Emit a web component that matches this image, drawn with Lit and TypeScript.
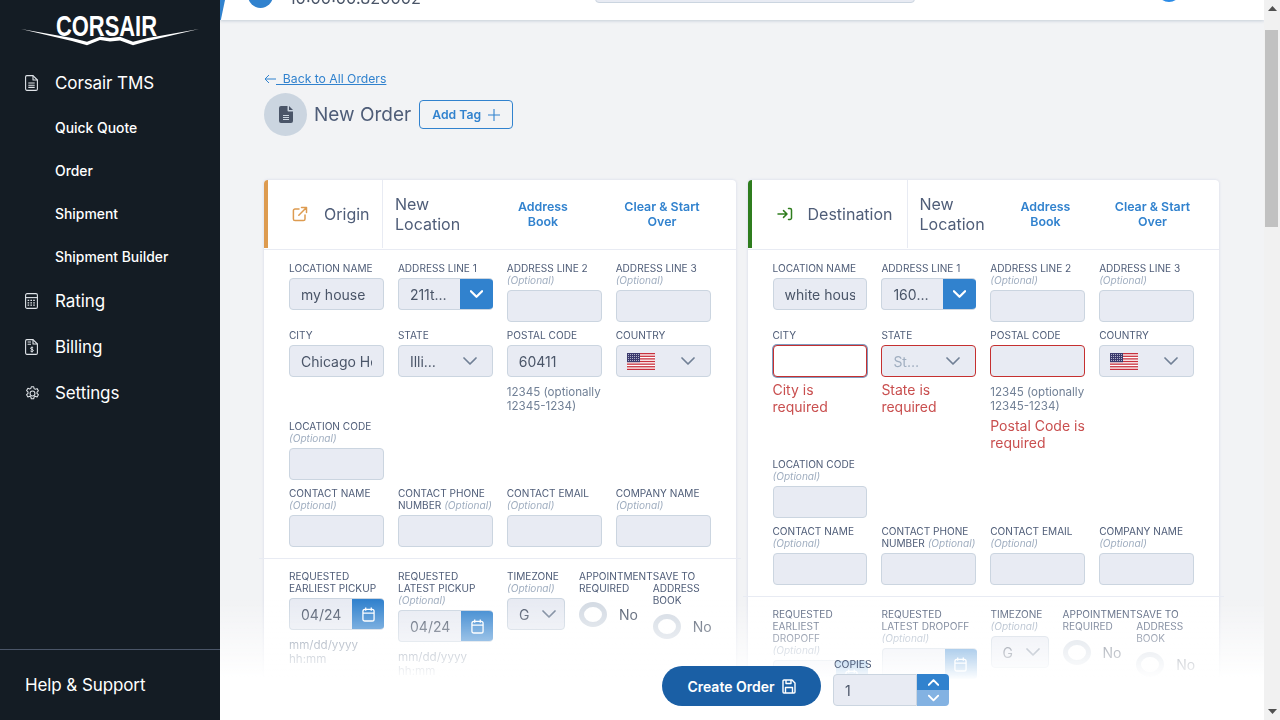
import { LitElement, html, css, nothing, svg } from "lit";
import { customElement } from "lit/decorators.js";

type Kind = "text" | "combo" | "select" | "flag" | "empty";

interface Field {
  label: string;
  opt?: boolean;
  inlineOpt?: boolean;
  kind: Kind;
  value?: string;
  placeholder?: boolean;
  invalid?: boolean;
  focus?: boolean;
  hint?: string;
  error?: string;
  newRow?: boolean;
}

interface Side {
  cls: string;
  title: string;
  icon: unknown;
  main: Field[];
  earliestLabel: string;
  latestLabel: string;
  earliestValue: string;
  latestValue: string;
  earliestOpt: boolean;
}

const chevronDown = (cls = "") => html`<svg class="chev ${cls}" viewBox="0 0 14 8" width="14" height="8"><polyline points="1,1 7,7 13,1" fill="none" stroke="currentColor" stroke-width="1.7" stroke-linecap="round" stroke-linejoin="round"/></svg>`;
const chevronUp = () => html`<svg viewBox="0 0 14 8" width="11" height="7"><polyline points="1,7 7,1 13,7" fill="none" stroke="currentColor" stroke-width="2.6" stroke-linecap="round" stroke-linejoin="round"/></svg>`;
const chevronDownBold = (w = 13) => html`<svg viewBox="0 0 14 8" width=${w} height="8"><polyline points="1,1 7,7 13,1" fill="none" stroke="currentColor" stroke-width="2.4" stroke-linecap="round" stroke-linejoin="round"/></svg>`;

const calendar = html`<svg viewBox="0 0 14 16" width="13" height="15" fill="none" stroke="currentColor" stroke-width="1.4"><rect x="1" y="2.5" width="12" height="12.5" rx="2"/><path d="M1 6.5h12M4 0.5v3.5M10 0.5v3.5" /></svg>`;

const usFlag = html`<svg class="flag" viewBox="0 0 28 17" width="28" height="17">
  <rect width="28" height="17" fill="#fff"/>
  ${[0, 2, 4, 6, 8, 10, 12].map((i) => svg`<rect y=${i * 1.31} width="28" height="1.31" fill="#c8313e"/>`)}
  <rect width="13" height="9.2" fill="#3c3b6e"/>
  ${[1.5, 3.5, 5.5, 7.5].map((y) => [1.5, 3.5, 5.5, 7.5, 9.5, 11.5].map((x) => svg`<rect x=${x - 0.4} y=${y - 0.4} width="0.9" height="0.9" fill="#cfd0e0"/>`))}
</svg>`;

const originIcon = html`<svg viewBox="0 0 16 16" width="16" height="16" fill="none" stroke="#dd9b50" stroke-width="1.5" stroke-linecap="round" stroke-linejoin="round"><path d="M7 3H3a1.6 1.6 0 0 0-1.6 1.6V13A1.6 1.6 0 0 0 3 14.6h8.4A1.6 1.6 0 0 0 13 13V9"/><path d="M9.5 1.5h5v5M14.5 1.5 6.8 9.2"/></svg>`;
const destIcon = html`<svg viewBox="0 0 16 14" width="16" height="14" fill="none" stroke="#2f7d1e" stroke-width="1.5" stroke-linecap="round" stroke-linejoin="round"><path d="M1 7h8.500M6.500 3.600 10 7l-3.500 3.400"/><path d="M11.500 1.500h1.500a1.500 1.500 0 0 1 1.500 1.500v8a1.500 1.500 0 0 1-1.500 1.500h-1.500"/></svg>`;

const navStroke = { fill: "none", stroke: "#dfe3e8", width: "1.1" };
const docIcon = html`<svg viewBox="0 0 13 16" width="13" height="16" fill=${navStroke.fill} stroke=${navStroke.stroke} stroke-width=${navStroke.width} stroke-linejoin="round"><path d="M1.800.6h6.200l4.400 4.400v9a1.400 1.400 0 0 1-1.400 1.400H1.800A1.400 1.400 0 0 1 .6 14V2A1.400 1.400 0 0 1 1.800.6Z"/><path d="M8 .6V5h4.400M3.300 8h6.400M3.300 10.200h6.400M3.300 12.400h6.400"/></svg>`;
const calcIcon = html`<svg viewBox="0 0 13 16" width="13" height="16" fill=${navStroke.fill} stroke=${navStroke.stroke} stroke-width=${navStroke.width}><rect x=".6" y=".6" width="11.800" height="14.800" rx="1.500"/><path d="M.6 4.600h11.800"/><path stroke-dasharray="1.600 1.200" stroke-width="1.300" d="M2.600 7.400h8M2.600 9.800h8M2.600 12.200h8"/></svg>`;
const billIcon = html`<svg viewBox="0 0 13 16" width="13" height="16" fill=${navStroke.fill} stroke=${navStroke.stroke} stroke-width=${navStroke.width} stroke-linejoin="round"><path d="M1.800.6h6.200l4.400 4.400v9a1.400 1.400 0 0 1-1.400 1.400H1.800A1.400 1.400 0 0 1 .6 14V2A1.400 1.400 0 0 1 1.800.6Z"/><path d="M8 .6V5h4.400M2.600 3h3.400M2.600 5.200h3.400"/><path stroke-width="1" d="M8.200 8.700c-.4-.5-2.600-.7-2.600.6 0 1.400 2.800.8 2.800 2.200 0 1.300-2.400 1.100-3 .5M7 7.700v5.800"/></svg>`;
const gearIcon = html`<svg viewBox="0 0 16 16" width="15" height="15" fill=${navStroke.fill} stroke=${navStroke.stroke} stroke-width="1.100" stroke-linejoin="round"><circle cx="8" cy="8" r="2.600"/><path d="M6.700.8h2.600l.4 2 1.300.7 1.900-.7 1.400 2.400-1.500 1.300v1.500l1.500 1.300-1.400 2.400-1.900-.7-1.300.7-.4 2H6.700l-.4-2-1.300-.7-1.900.7-1.400-2.400 1.500-1.300V6.200L1.700 4.900l1.400-2.400 1.900.7 1.300-.7Z"/></svg>`;

const addr = (value: string): Field => ({ label: "Address Line 1", kind: "combo", value });
const opt = (label: string, newRow = false): Field => ({ label, opt: true, kind: "empty", newRow });

const contactRow: Field[] = [
  opt("Contact Name", true),
  { label: "Contact Phone Number", opt: true, inlineOpt: true, kind: "empty" },
  opt("Contact Email"),
  opt("Company Name"),
];

const sides: Side[] = [
  {
    cls: "origin",
    title: "Origin",
    icon: originIcon,
    earliestLabel: "Requested Earliest Pickup",
    latestLabel: "Requested Latest Pickup",
    earliestValue: "04/24",
    latestValue: "04/24",
    earliestOpt: false,
    main: [
      { label: "Location Name", kind: "text", value: "my house" },
      addr("211th Street"),
      opt("Address Line 2"),
      opt("Address Line 3"),
      { label: "City", kind: "text", value: "Chicago Heights" },
      { label: "State", kind: "select", value: "Illinois" },
      { label: "Postal Code", kind: "text", value: "60411", hint: "12345 (optionally 12345-1234)" },
      { label: "Country", kind: "flag" },
      opt("Location Code", true),
      ...contactRow,
    ],
  },
  {
    cls: "dest",
    title: "Destination",
    icon: destIcon,
    earliestLabel: "Requested Earliest Dropoff",
    latestLabel: "Requested Latest Dropoff",
    earliestValue: "",
    latestValue: "",
    earliestOpt: true,
    main: [
      { label: "Location Name", kind: "text", value: "white house" },
      addr("1600 Pennsylvania"),
      opt("Address Line 2"),
      opt("Address Line 3"),
      { label: "City", kind: "empty", invalid: true, focus: true, error: "City is required" },
      { label: "State", kind: "select", value: "State/Province", placeholder: true, invalid: true, error: "State is required" },
      { label: "Postal Code", kind: "empty", invalid: true, hint: "12345 (optionally 12345-1234)", error: "Postal Code is required" },
      { label: "Country", kind: "flag" },
      opt("Location Code", true),
      ...contactRow,
    ],
  },
];

@customElement("app-root")
export class AppRoot extends LitElement {
  static styles = css`
    :host {
      display: flex;
      width: 1280px;
      height: 720px;
      overflow: hidden;
      position: relative;
      font-family: Inter, "Liberation Sans", sans-serif;
      color: #4a5568;
    }
    * { box-sizing: border-box; }

    /* sidebar */
    .sidebar {
      flex: 0 0 220px;
      background: #141c24;
      color: #fff;
      display: flex;
      flex-direction: column;
    }
    .logo { height: 60px; display: block; }
    .nav-main {
      height: 46px;
      display: flex;
      align-items: center;
      padding-left: 25px;
      font-size: 17px;
      letter-spacing: -0.1px;
    }
    .nav-icon { width: 30px; display: flex; align-items: center; }
    .nav-sub {
      height: 43px;
      display: flex;
      align-items: center;
      padding-left: 55px;
      font-size: 13.9px;
      font-weight: 500;
    }
    .help {
      margin-top: auto;
      height: 71px;
      border-top: 1px solid #4a5568;
      display: flex;
      align-items: center;
      padding-left: 25px;
      font-size: 17px;
      letter-spacing: -0.1px;
    }

    /* main column */
    .view {
      flex: 1;
      min-width: 0;
      background: #f2f3f5;
      display: flex;
      flex-direction: column;
      position: relative;
      overflow: hidden;
    }
    .topbar {
      flex: 0 0 20px;
      background: #fff;
      box-shadow: 0 1px 3px rgba(160, 174, 192, 0.55);
      display: flex;
      align-items: flex-end;
      overflow: hidden;
      position: relative;
      z-index: 1;
    }
    .wedge {
      position: absolute;
      left: 0;
      top: 0;
      width: 5px;
      height: 24px;
      background: #3182ce;
      clip-path: polygon(0 0, 100% 0, 0 100%);
    }
    .avatar {
      flex: 0 0 25px;
      height: 25px;
      margin: 0 0 12px 28px;
      border-radius: 50%;
      background: #3182ce;
    }
    .clock {
      flex: 0 0 140px;
      margin: 0 0 10px 16px;
      font-size: 16.3px;
      line-height: 24px;
      color: #4a5568;
      white-space: nowrap;
    }
    .search {
      flex: 0 0 320px;
      height: 30px;
      margin: 0 0 17px 166px;
      background: #e8ebf3;
      border: 1px solid #cbd5e0;
      border-radius: 4px;
    }
    .bell {
      flex: 0 0 24px;
      height: 24px;
      margin: 0 0 18px 242px;
      border-radius: 50%;
      background: #2b8be6;
    }

    .scroll {
      flex: 1;
      min-height: 0;
      padding: 52px 45px 0 44px;
      overflow: hidden;
      will-change: opacity;
    }
    .back {
      display: flex;
      align-items: center;
      height: 14px;
      font-size: 12.2px;
      line-height: 14px;
      color: #3182ce;
    }
    .back span { text-decoration: underline; white-space: pre; }
    .back svg { flex: 0 0 12px; }
    .title-row {
      display: flex;
      align-items: center;
      margin-top: 7px;
      height: 43px;
    }
    .title-icon {
      width: 43px;
      height: 43px;
      border-radius: 50%;
      background: #cbd5e0;
      display: flex;
      align-items: center;
      justify-content: center;
      margin-right: 7px;
    }
    h1 {
      margin: 0 8px 0 0;
      font-size: 19px;
      font-weight: 400;
      color: #4f5d78;
    }
    .add-tag {
      width: 94px;
      height: 29px;
      border: 1px solid #3182ce;
      border-radius: 4px;
      display: flex;
      align-items: center;
      justify-content: center;
      gap: 7px;
      font-size: 12.2px;
      font-weight: 600;
      color: #3182ce;
    }
    .cards {
      display: grid;
      grid-template-columns: minmax(0, 1fr) minmax(0, 1fr);
      column-gap: 12px;
      align-items: start;
      margin-top: 44px;
    }
    .card {
      background: #fff;
      border-radius: 4px;
      box-shadow: 0 0 3px rgba(170, 180, 215, 0.4);
    }
    .head {
      display: grid;
      height: 70px;
      padding-bottom: 1px;
      border-bottom: 1px solid #e8ebf3;
      border-radius: 4px 4px 0 0;
      overflow: hidden;
    }
    .origin .head { grid-template-columns: 119px 107px 106px 132px 7px; }
    .dest .head { grid-template-columns: 160px 97px 82px 132px; }
    .tab {
      display: flex;
      align-items: center;
      border-left: 4px solid #dd9b50;
      border-right: 1px solid #e8ebf3;
      font-size: 16px;
      color: #4f5d78;
    }
    .origin .tab { padding-left: 24px; gap: 16px; }
    .dest .tab { border-left-color: #2f7d1e; padding-left: 25px; gap: 15px; }
    .newloc {
      padding-left: 12px;
      font-size: 16px;
      line-height: 20px;
      color: #4f5d78;
      align-self: center;
    }
    .hlink {
      align-self: center;
      text-align: center;
      font-size: 12.4px;
      line-height: 15px;
      font-weight: 600;
      color: #3182ce;
    }

    .grid {
      display: grid;
      grid-template-columns: repeat(4, minmax(0, 1fr));
      column-gap: 14px;
      row-gap: 7px;
      padding: 12px 25px 11px;
    }
    .new-row { grid-column: 1; }
    .label {
      font-size: 10.1px;
      line-height: 12px;
      text-transform: uppercase;
      color: #4f5d78;
      margin-bottom: 4px;
    }
    .label i {
      text-transform: none;
      color: #a0aec0;
      font-weight: 400;
    }
    .label i.block { display: block; }
    .input {
      height: 32px;
      background: #e8ebf3;
      border: 1px solid #cbd5e0;
      border-radius: 4px;
      display: flex;
      align-items: center;
      font-size: 14px;
      color: #4a5568;
      overflow: hidden;
      position: relative;
    }
    .input .val {
      flex: 1;
      min-width: 0;
      margin: 0 11px;
      overflow: hidden;
      white-space: nowrap;
    }
    .input.ellipsis .val { text-overflow: ellipsis; }
    .input.sel .val { margin-right: 20px; }
    .input.has-btn { border-right: 0; }
    .input.invalid { border-color: #c53030; }
    .input.focus {
      background: #fff;
      box-shadow: 0 0 0 1px #7f9cc0;
    }
    .val.ph { color: #a0aec0; }
    .chev { color: #718096; flex: 0 0 14px; margin-right: 15px; }
    .blue {
      flex: 0 0 33px;
      align-self: stretch;
      background: #3182ce;
      color: #fff;
      display: flex;
      align-items: center;
      justify-content: center;
    }
    .flag { margin-left: 10px; margin-right: auto; }
    .hint {
      margin-top: 8px;
      font-size: 11.6px;
      line-height: 14px;
      color: #718096;
    }
    .err {
      margin-top: 4px;
      font-size: 14px;
      line-height: 17px;
      color: #c94f4f;
    }

    .rule {
      height: 1px;
      margin: 0 -5px;
      background: #e8ebf3;
    }
    .times {
      display: flex;
      gap: 14px;
      padding: 11px 25px 0;
      height: 170px;
    }
    .times .date { flex: 0 0 95px; min-width: 0; }
    .date .val { margin-right: 0; }
    .date .blue { flex-basis: 32px; }
    .times .tz { flex: 0 0 58px; }
    .pair { flex: 0 0 131.5px; display: flex; }
    .appt { flex: 0 0 73px; }
    .save { flex: 0 0 58.5px; }
    .toggle {
      display: flex;
      align-items: center;
      gap: 12px;
      height: 32px;
      font-size: 14px;
      color: #4a5568;
    }
    .ring {
      flex: 0 0 28px;
      height: 25px;
      border-radius: 50%;
      border: 5px solid #d3dae3;
      background: #fff;
    }
    .tz .val { margin-right: 9px; }
    .tz .chev { margin-right: 8px; }

    /* floating footer */
    .fade {
      position: absolute;
      left: 0;
      right: 0;
      top: 600px;
      bottom: 0;
      background: linear-gradient(to bottom, rgba(255, 255, 255, 0) 0, #fff 80px);
      pointer-events: none;
    }
    .actions {
      position: absolute;
      left: 442px;
      bottom: 14px;
      display: flex;
      align-items: flex-end;
      gap: 12px;
      will-change: opacity;
    }
    .create {
      width: 159px;
      height: 40px;
      border-radius: 20px;
      background: #1a5fa5;
      color: #fff;
      display: flex;
      align-items: center;
      justify-content: center;
      gap: 7px;
      font-size: 14px;
      font-weight: 600;
    }
    .copies-label {
      font-size: 10.3px;
      line-height: 12px;
      color: #4f5d78;
      margin: 0 0 4px 1px;
    }
    .copies { display: flex; width: 116px; height: 32px; }
    .copies .input {
      flex: 1;
      border-radius: 4px 0 0 4px;
      font-size: 14px;
    }
    .stepper {
      flex: 0 0 32px;
      display: flex;
      flex-direction: column;
      border-radius: 0 4px 4px 0;
      overflow: hidden;
      color: #fff;
    }
    .stepper div {
      flex: 1;
      display: flex;
      align-items: center;
      justify-content: center;
      background: #3182ce;
    }
    .stepper div + div { background: #83b2e2; }

    /* page scrollbar */
    .bar {
      flex: 0 0 16px;
      background: #f1f1f1;
      display: flex;
      flex-direction: column;
      position: relative;
    }
    .arrow {
      flex: 0 0 17px;
      display: flex;
      align-items: center;
      justify-content: center;
    }
    .thumb {
      flex: 0 0 197px;
      margin: 13px 2px 0 1px;
      background: #c1c1c1;
    }
    .arrow.down { margin-top: auto; }
  `;

  private renderInput(f: Field) {
    const cls = ["input"];
    if (f.invalid) cls.push("invalid");
    if (f.focus) cls.push("focus");
    if (f.kind === "combo" || f.kind === "select") cls.push("ellipsis");
    if (f.kind === "select") cls.push("sel");
    if (f.kind === "combo") cls.push("has-btn");
    return html`<div class=${cls.join(" ")}>
      ${f.kind === "flag" ? usFlag : nothing}
      ${f.kind === "text" || f.kind === "combo" || f.kind === "select"
        ? html`<div class="val ${f.placeholder ? "ph" : ""}">${f.value}</div>`
        : nothing}
      ${f.kind === "combo" ? html`<div class="blue">${chevronDownBold()}</div>` : nothing}
      ${f.kind === "select" || f.kind === "flag" ? chevronDown() : nothing}
    </div>`;
  }

  private renderLabel(label: string, optional?: boolean, inline?: boolean) {
    return html`<div class="label">${label}${optional
      ? inline
        ? html` <i>(Optional)</i>`
        : html`<i class="block">(Optional)</i>`
      : nothing}</div>`;
  }

  private renderField(f: Field) {
    return html`<div class=${f.newRow ? "new-row" : ""}>
      ${this.renderLabel(f.label, f.opt, f.inlineOpt)}
      ${this.renderInput(f)}
      ${f.hint ? html`<div class="hint">${f.hint}</div>` : nothing}
      ${f.error ? html`<div class="err">${f.error}</div>` : nothing}
    </div>`;
  }

  private renderDate(label: string, value: string, optional: boolean) {
    return html`<div class="date">
      ${this.renderLabel(label, optional)}
      <div class="input has-btn">
        <div class="val">${value}</div>
        <div class="blue">${calendar}</div>
      </div>
      <div class="hint">mm/dd/yyyy hh:mm</div>
    </div>`;
  }

  private renderToggle(cls: string, label: string) {
    return html`<div class=${cls}>
      ${this.renderLabel(label)}
      <div class="toggle"><div class="ring"></div>No</div>
    </div>`;
  }

  private renderCard(s: Side) {
    return html`<section class="card ${s.cls}">
      <div class="head">
        <div class="tab">${s.icon}<span>${s.title}</span></div>
        <div class="newloc">New Location</div>
        <div class="hlink">Address<br />Book</div>
        <div class="hlink">Clear &amp; Start<br />Over</div>
      </div>
      <div class="grid">${s.main.map((f) => this.renderField(f))}</div>
      <div class="rule"></div>
      <div class="times">
        ${this.renderDate(s.earliestLabel, s.earliestValue, s.earliestOpt)}
        ${this.renderDate(s.latestLabel, s.latestValue, true)}
        <div class="tz">
          ${this.renderLabel("Timezone", true)}
          <div class="input"><div class="val">G</div>${chevronDown()}</div>
        </div>
        <div class="pair">
          ${this.renderToggle("appt", "Appointment Required")}
          ${this.renderToggle("save", "Save to Address Book")}
        </div>
      </div>
    </section>`;
  }

  render() {
    return html`
      <aside class="sidebar">
        <svg class="logo" viewBox="0 0 220 60" width="220" height="60">
          <path fill="#fff" d="M21 29 72 38 87 41.700 100 36.700 110 38 120 36.700 133 41.700 148 38 199 29 148 41 133 45.300 120 40.500 110 41.500 100 40 87 45.300 72 41Z"/>
          <text x="56" y="36" font-family="Liberation Sans, sans-serif" font-weight="700" font-size="30" fill="#fff" textLength="101" lengthAdjust="spacingAndGlyphs">CORSAIR</text>
        </svg>
        <div class="nav-main"><span class="nav-icon">${docIcon}</span>Corsair TMS</div>
        <div class="nav-sub">Quick Quote</div>
        <div class="nav-sub">Order</div>
        <div class="nav-sub">Shipment</div>
        <div class="nav-sub">Shipment Builder</div>
        <div class="nav-main"><span class="nav-icon">${calcIcon}</span>Rating</div>
        <div class="nav-main"><span class="nav-icon">${billIcon}</span>Billing</div>
        <div class="nav-main"><span class="nav-icon">${gearIcon}</span>Settings</div>
        <div class="help">Help &amp; Support</div>
      </aside>

      <main class="view">
        <header class="topbar">
          <div class="wedge"></div>
          <div class="avatar"></div>
          <div class="clock">10:00:00.820002</div>
          <div class="search"></div>
          <div class="bell"></div>
        </header>
        <div class="scroll">
          <div class="back">
            <svg viewBox="0 0 12 10" width="12" height="10" fill="none" stroke="#3182ce" stroke-width="1"><path d="M12 5H1M5 1 1 5l4 4"/></svg>
            <span>  Back to All Orders</span>
          </div>
          <div class="title-row">
            <div class="title-icon">
              <svg viewBox="0 0 14 17" width="14" height="17"><path fill="#4a5568" d="M2 0h6.500v4.500a1 1 0 0 0 1 1H14V15a2 2 0 0 1-2 2H2a2 2 0 0 1-2-2V2a2 2 0 0 1 2-2Z"/><path fill="#4a5568" d="M10 0l4 4h-4Z"/><path stroke="#cbd5e0" stroke-width="1" d="M4 9.500h6M4 11.500h6M4 13.500h6"/></svg>
            </div>
            <h1>New Order</h1>
            <div class="add-tag">Add Tag
              <svg viewBox="0 0 12 12" width="12" height="12" stroke="#3182ce" stroke-width="1.100"><path d="M6 0v12M0 6h12"/></svg>
            </div>
          </div>
          <div class="cards">${sides.map((s) => this.renderCard(s))}</div>
        </div>
        <div class="fade"></div>
        <div class="actions">
          <div class="create">Create Order
            <svg viewBox="0 0 14 15" width="14" height="15" fill="none" stroke="#fff" stroke-width="1.400" stroke-linejoin="round"><path d="M2 1h8l3 3v9a1 1 0 0 1-1 1H2a1 1 0 0 1-1-1V2a1 1 0 0 1 1-1Z"/><path d="M4 1v3.500h5V1M3.500 14V8.500h7V14"/></svg>
          </div>
          <div>
            <div class="copies-label">COPIES</div>
            <div class="copies">
              <div class="input"><div class="val">1</div></div>
              <div class="stepper"><div>${chevronUp()}</div><div>${chevronDownBold(11)}</div></div>
            </div>
          </div>
        </div>
      </main>

      <div class="bar">
        <div class="arrow"><svg width="9" height="5" viewBox="0 0 9 5"><path d="M4.500 0 9 5H0Z" fill="#505050"/></svg></div>
        <div class="thumb"></div>
        <div class="arrow down"><svg width="9" height="5" viewBox="0 0 9 5"><path d="M0 0h9L4.500 5Z" fill="#505050"/></svg></div>
      </div>
    `;
  }
}
